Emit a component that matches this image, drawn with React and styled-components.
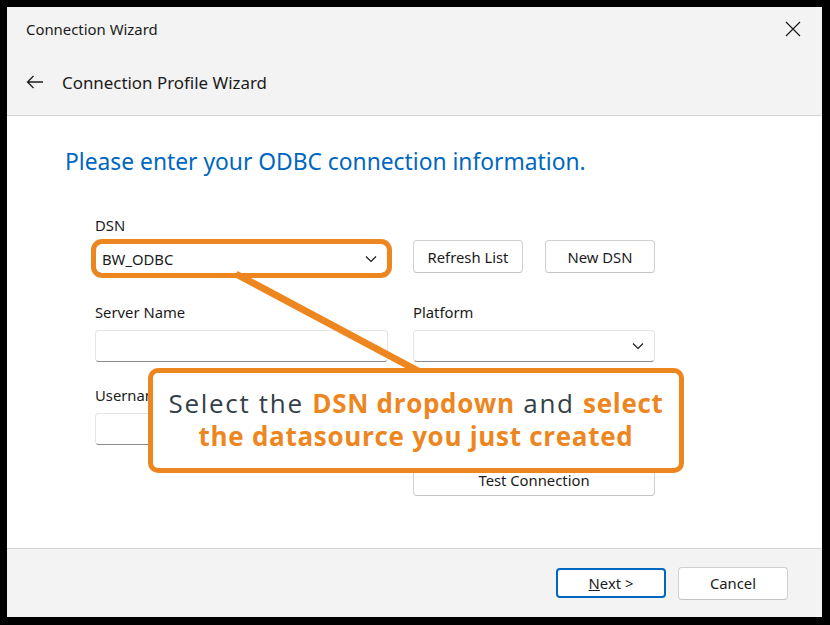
import React from "react";
import styled, { createGlobalStyle } from "styled-components";

const colors = {
  black: "#000000",
  chrome: "#f3f3f3",
  white: "#ffffff",
  text: "#1b1b1b",
  blue: "#0067c0",
  line: "#d5d5d5",
  field: "#e5e5e5",
  fieldBottom: "#8a8a8a",
  orange: "#ee861f",
  calloutText: "#333f48",
};

const GlobalStyle = createGlobalStyle`
  html, body {
    margin: 0;
    padding: 0;
    background: ${colors.black};
  }
  body {
    font-family: "Noto Sans", "Open Sans", sans-serif;
    color: ${colors.text};
  }
`;

function Chevron() {
  return (
    <svg width="12" height="8" viewBox="0 0 12 8">
      <path d="M1 1.5 L6 6.5 L11 1.5" fill="none" stroke="#1b1b1b" strokeWidth="1.2" />
    </svg>
  );
}

function App() {
  return (
    <>
      <GlobalStyle />
      <Screen>
        <Window>
          <Header>
            <TitleBar>
              <Title>Connection Wizard</Title>
              <CloseButton aria-label="Close">
                <svg width="16" height="16" viewBox="0 0 16 16">
                  <path d="M1 1 L15 15 M15 1 L1 15" stroke="#1b1b1b" strokeWidth="1.2" />
                </svg>
              </CloseButton>
            </TitleBar>
            <NavBar>
              <svg width="18" height="14" viewBox="0 0 18 14">
                <path d="M17 7 H1.5 M7.5 1 L1.5 7 L7.5 13" fill="none" stroke="#1b1b1b" strokeWidth="1.3" />
              </svg>
              <NavTitle>Connection Profile Wizard</NavTitle>
            </NavBar>
          </Header>

          <Content>
            <Heading>Please enter your ODBC connection information.</Heading>
            <Form>
              <Field>
                <Label>DSN</Label>
                <Combo highlighted>
                  <span>BW_ODBC</span>
                  <Chevron />
                </Combo>
              </Field>
              <ButtonRow>
                <Button width={110}>Refresh List</Button>
                <Button width={110}>New DSN</Button>
              </ButtonRow>

              <Field offset={3}>
                <Label>Server Name</Label>
                <Input />
              </Field>
              <Field offset={3}>
                <Label>Platform</Label>
                <Combo>
                  <span />
                  <Chevron />
                </Combo>
              </Field>

              <Field offset={-2}>
                <Label>Username</Label>
                <Input />
              </Field>
              <span />

              <span />
              <Button offset={-7}>Test Connection</Button>
            </Form>

            <Pointer width="830" height="625" viewBox="0 0 830 625">
              <line x1="236" y1="274" x2="420" y2="372" stroke={colors.orange} strokeWidth="7" />
            </Pointer>
            <Callout>
              <CalloutText>
                Select the <Strong>DSN dropdown</Strong> and <Strong>select</Strong>
                <br />
                <Strong>the datasource you just created</Strong>
              </CalloutText>
            </Callout>
          </Content>

          <Footer>
            <Button width={110} primary>
              <u>N</u>ext &gt;
            </Button>
            <Button width={110}>Cancel</Button>
          </Footer>
        </Window>
      </Screen>
    </>
  );
}

const Screen = styled.div`
  width: 830px;
  height: 625px;
  padding: 7px 8px 8px 7px;
  box-sizing: border-box;
`;

const Window = styled.div`
  position: relative;
  width: 815px;
  height: 610px;
  display: flex;
  flex-direction: column;
  background: ${colors.chrome};
`;

const Header = styled.div`
  height: 109px;
  border-bottom: 1px solid ${colors.line};
  box-sizing: border-box;
  display: flex;
  flex-direction: column;
`;

const TitleBar = styled.div`
  height: 44px;
  display: flex;
  align-items: center;
  justify-content: space-between;
  padding: 0 21px 0 19px;
`;

const Title = styled.div`
  font-size: 14.9px;
`;

const CloseButton = styled.div`
  display: flex;
  align-items: center;
`;

const NavBar = styled.div`
  flex: 1;
  display: flex;
  align-items: center;
  gap: 18px;
  padding: 0 0 2px 19px;
`;

const NavTitle = styled.div`
  font-size: 16.9px;
`;

const Content = styled.div`
  position: relative;
  height: 433px;
  background: ${colors.white};
  border-bottom: 1px solid ${colors.line};
  box-sizing: border-box;
  padding: 30px 0 0 58px;
`;

const Heading = styled.h1`
  margin: 0;
  font-size: 22.8px;
  font-weight: 400;
  line-height: 32px;
  color: ${colors.blue};
`;

const Form = styled.div`
  display: grid;
  grid-template-columns: 293px 242px;
  column-gap: 25px;
  row-gap: 25px;
  align-items: end;
  margin: 37px 0 0 30px;
`;

const Field = styled.div`
  display: flex;
  flex-direction: column;
  gap: 8px;
  margin-top: ${(p) => p.offset || 0}px;
`;

const Label = styled.div`
  font-size: 14.8px;
  line-height: 20px;
`;

const Input = styled.div`
  height: 32px;
  box-sizing: border-box;
  background: ${colors.white};
  border: 1px solid ${colors.field};
  border-bottom-color: ${colors.fieldBottom};
  border-radius: 4px;
`;

const Combo = styled.div`
  height: ${(p) => (p.highlighted ? 31 : 32)}px;
  box-sizing: border-box;
  display: flex;
  align-items: center;
  justify-content: space-between;
  padding: 0 10px 0 6px;
  font-size: 14.8px;
  background: ${colors.white};
  border: 1px solid ${colors.field};
  border-bottom-color: ${colors.fieldBottom};
  border-radius: 4px;
  outline: ${(p) => (p.highlighted ? `5px solid ${colors.orange}` : "none")};
  outline-offset: -1px;
  ${(p) => p.highlighted && "border-radius: 7px; position: relative; z-index: 1;"}
`;

const ButtonRow = styled.div`
  display: flex;
  gap: 22px;
  margin-bottom: 1px;
`;

const Button = styled.div`
  width: ${(p) => (p.width ? `${p.width}px` : "auto")};
  height: ${(p) => (p.primary ? 30 : 33)}px;
  box-sizing: border-box;
  margin-top: ${(p) => p.offset || 0}px;
  display: flex;
  align-items: center;
  justify-content: center;
  font-size: 14.8px;
  background: ${colors.white};
  border: ${(p) => (p.primary ? `2px solid ${colors.blue}` : `1px solid #d0d0d0`)};
  border-radius: 4px;
  ${(p) => !p.primary && "border-bottom-color: #c4c4c4;"}
`;

const Pointer = styled.svg`
  position: absolute;
  left: -7px;
  top: -116px;
  pointer-events: none;
  z-index: 2;
`;

const Callout = styled.div`
  position: absolute;
  left: 141px;
  top: 252px;
  width: 536px;
  height: 105px;
  box-sizing: border-box;
  z-index: 3;
  display: flex;
  align-items: center;
  justify-content: center;
  background: ${colors.white};
  border: 5px solid ${colors.orange};
  border-radius: 10px;
  padding-bottom: 2px;
`;

const CalloutText = styled.div`
  text-align: center;
  font-family: "Open Sans", "Noto Sans", sans-serif;
  font-size: 26px;
  line-height: 33px;
  letter-spacing: 1.7px;
  color: ${colors.calloutText};
  white-space: nowrap;
`;

const Strong = styled.b`
  font-weight: 700;
  letter-spacing: 0.7px;
  color: ${colors.orange};
`;

const Footer = styled.div`
  flex: 1;
  display: flex;
  align-items: center;
  justify-content: flex-end;
  gap: 12px;
  padding: 0 34px 0 0;
`;

export default App;
